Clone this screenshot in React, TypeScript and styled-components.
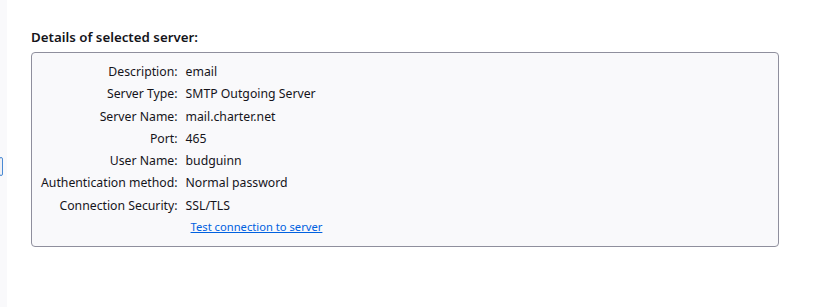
import { Fragment } from "react"
import styled, { createGlobalStyle } from "styled-components"

const GlobalStyle = createGlobalStyle`
    body {
        margin: 0;
        background: #ffffff;
        font-family: "Noto Sans", "Open Sans", sans-serif;
        color: #15141a;
    }
`

const ROWS: [string, string][] = [
    ["Description:", "email"],
    ["Server Type:", "SMTP Outgoing Server"],
    ["Server Name:", "mail.charter.net"],
    ["Port:", "465"],
    ["User Name:", "budguinn"],
    ["Authentication method:", "Normal password"],
    ["Connection Security:", "SSL/TLS"],
]

export default function App() {
    return <>
        <GlobalStyle/>
        <Page>
            <SidePane>
                <SideButton/>
            </SidePane>
            <Content>
                <Heading>Details of selected server:</Heading>
                <DetailsBox>
                    {ROWS.map(([label, value]) => <Fragment key={label}>
                        <Label>{label}</Label>
                        <Value>{value}</Value>
                    </Fragment>)}
                    <LinkCell>
                        <TestLink href="#">Test connection to server</TestLink>
                    </LinkCell>
                </DetailsBox>
            </Content>
        </Page>
    </>
}

const Page = styled.div`
    display: flex;
    height: 307px;
    width: 833px;
    overflow: hidden;
`

const SidePane = styled.div`
    flex: 0 0 7px;
    background: #f9f9fb;
    padding-top: 157px;
    box-sizing: border-box;
`

const SideButton = styled.div`
    width: 2px;
    height: 17px;
    margin-left: -1px;
    border: solid 1px #4a8ad4;
    border-radius: 3px;
    background: #f0f0f4;
`

const Content = styled.div`
    flex: 1;
    padding: 27px 0 0 24px;
`

const Heading = styled.div`
    font-size: 13.3px;
    font-weight: 600;
    line-height: 20px;
    margin-bottom: 5px;
`

const DetailsBox = styled.div`
    box-sizing: border-box;
    width: 748px;
    height: 195px;
    padding: 8px 10px 0 9px;
    background: #f9f9fb;
    border: solid 1px #8f8f9d;
    border-radius: 4px;
    display: grid;
    grid-template-columns: auto 1fr;
    grid-auto-rows: 22.3px;
    column-gap: 8px;
    align-content: start;
    font-size: 12.25px;
`

const Label = styled.div`
    text-align: right;
    white-space: nowrap;
    line-height: 22px;
`

const Value = styled.div`
    white-space: nowrap;
    line-height: 22px;
`

const LinkCell = styled.div`
    grid-column: 2;
    padding-left: 5px;
    line-height: 20px;
`

const TestLink = styled.a`
    font-size: 11.2px;
    color: #0061e0;
    text-decoration: underline;
`
